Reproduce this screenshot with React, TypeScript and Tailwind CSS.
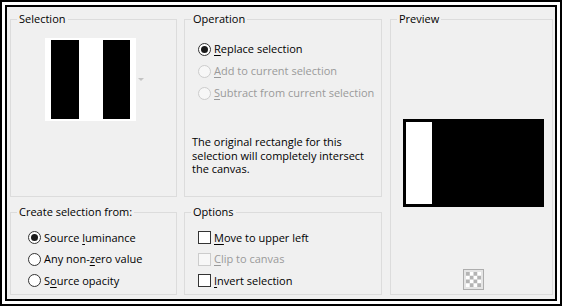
import type { ReactNode } from "react";

function Group({ title, className, children }: { title: string; className?: string; children: ReactNode }) {
  return (
    <fieldset className={`min-w-0 border border-[#dcdcdc] ${className ?? ""}`}>
      <legend className="ml-[6px] px-[2px] text-[11px] leading-[14px] text-black">{title}</legend>
      {children}
    </fieldset>
  );
}

function Radio({ checked, disabled, children }: { checked?: boolean; disabled?: boolean; children: ReactNode }) {
  return (
    <div className="flex items-center gap-[3px]">
      <span
        className={`flex h-[13px] w-[13px] items-center justify-center rounded-full border ${
          disabled ? "border-[#cccccc] bg-[#f7f7f7]" : "border-[#333333] bg-white"
        }`}
      >
        {checked && <span className="h-[7px] w-[7px] rounded-full bg-[#1a1a1a]" />}
      </span>
      <span className={disabled ? "text-[#9a9a9a]" : "text-black"}>{children}</span>
    </div>
  );
}

function Check({ disabled, children }: { disabled?: boolean; children: ReactNode }) {
  return (
    <div className="flex items-center gap-[3px]">
      <span
        className={`h-[13px] w-[13px] border ${
          disabled ? "border-[#cccccc] bg-[#f7f7f7]" : "border-[#333333] bg-white"
        }`}
      />
      <span className={disabled ? "text-[#9a9a9a]" : "text-black"}>{children}</span>
    </div>
  );
}

const U = ({ children }: { children: ReactNode }) => (
  <span className="underline decoration-1 underline-offset-[2px]">{children}</span>
);

export default function App() {
  return (
    <div
      className="h-[306px] w-[562px] border-2 border-black bg-white p-[3px] text-[11px] leading-[14px]"
      style={{ fontFamily: '"Segoe UI", "Open Sans", "Noto Sans", sans-serif' }}
    >
      <div className="flex h-full border-2 border-black bg-[#f0f0f0] pb-[4px] pl-[3px] pt-[5px]">
        {/* left column */}
        <div className="flex w-[167px] flex-col gap-[8px]">
          <Group title="Selection" className="h-[185px]">
            <div className="flex items-center pl-[34px] pt-[12px]">
              <div className="flex h-[83px] w-[91px] justify-between bg-white px-[6px] py-[2px]">
                <div className="w-[28px] bg-black" />
                <div className="w-[27px] bg-black" />
              </div>
              <svg width="6" height="4" viewBox="0 0 6 4" className="ml-[2px]">
                <path d="M0 0h6L3 3z" fill="#c4c4c4" />
              </svg>
            </div>
          </Group>
          <Group title="Create selection from:" className="flex-1">
            <div className="pl-[17px] pt-[8px]">
              <div className="flex h-[21.5px] items-center">
                <Radio checked>
                  Source <U>l</U>uminance
                </Radio>
              </div>
              <div className="flex h-[21.5px] items-center">
                <Radio>
                  Any non-<U>z</U>ero value
                </Radio>
              </div>
              <div className="flex h-[21.5px] items-center">
                <Radio>
                  S<U>o</U>urce opacity
                </Radio>
              </div>
            </div>
          </Group>
        </div>

        {/* middle column */}
        <div className="ml-[7px] flex w-[198px] flex-col gap-[8px]">
          <Group title="Operation" className="h-[185px]">
            <div className="pl-[13px] pt-[12px]">
              <div className="flex h-[22px] items-center">
                <Radio checked>
                  <U>R</U>eplace selection
                </Radio>
              </div>
              <div className="flex h-[22px] items-center">
                <Radio disabled>
                  <U>A</U>dd to current selection
                </Radio>
              </div>
              <div className="flex h-[22px] items-center">
                <Radio disabled>
                  <U>S</U>ubtract from current selection
                </Radio>
              </div>
            </div>
            <p className="mt-[31px] pl-[7px] pr-[4px] leading-[13.5px] text-black">
              The original rectangle for this
              <br />
              selection will completely intersect
              <br />
              the canvas.
            </p>
          </Group>
          <Group title="Options" className="flex-1">
            <div className="pl-[13px] pt-[8px]">
              <div className="flex h-[21.5px] items-center">
                <Check>
                  <U>M</U>ove to upper left
                </Check>
              </div>
              <div className="flex h-[21.5px] items-center">
                <Check disabled>
                  <U>C</U>lip to canvas
                </Check>
              </div>
              <div className="flex h-[21.5px] items-center">
                <Check>
                  <U>I</U>nvert selection
                </Check>
              </div>
            </div>
          </Group>
        </div>

        {/* preview */}
        <Group title="Preview" className="ml-[8px] w-[163px]">
          <div className="flex flex-col">
            <div className="ml-[12px] mt-[93px] flex h-[88px] w-[141px] bg-black p-[3px]">
              <div className="w-[26px] bg-white" />
            </div>
            <div className="ml-[72px] mt-[62px] h-[21px] w-[21px] border border-[#adadad] bg-[#e5e5e5] p-[2px]">
              <svg width="15" height="15" viewBox="0 0 16 16">
                <rect width="16" height="16" fill="#ffffff" />
                <path d="M0 0h4v4H0zM8 0h4v4H8zM4 4h4v4H4zM12 4h4v4h-4zM0 8h4v4H0zM8 8h4v4H8zM4 12h4v4H4zM12 12h4v4h-4z" fill="#b4b4b4" />
              </svg>
            </div>
          </div>
        </Group>
      </div>
    </div>
  );
}
